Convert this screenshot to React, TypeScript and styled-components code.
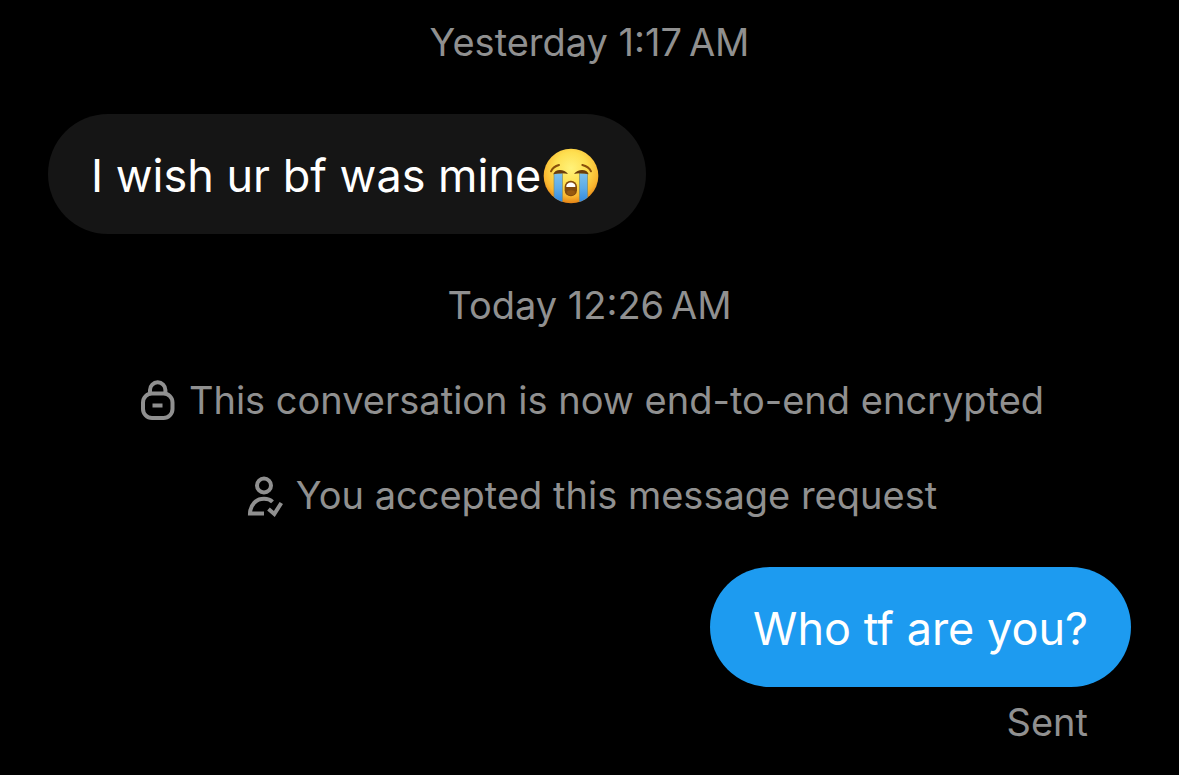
import React from "react";
import styled, { createGlobalStyle } from "styled-components";

const GlobalStyle = createGlobalStyle`
  body {
    margin: 0;
    background: #000;
    font-family: Inter, "Liberation Sans", sans-serif;
  }
`;

const Conversation = styled.main`
  display: flex;
  flex-direction: column;
  gap: 48px;
  padding: 19px 48px 28px;
`;

const Notice = styled.p`
  display: flex;
  align-items: center;
  justify-content: center;
  gap: 12px;
  margin: 0;
  color: #909090;
  font-size: 38px;
  line-height: 47px;
`;

const Message = styled.article<{ $own?: boolean }>`
  display: flex;
  flex-direction: column;
  align-items: ${({ $own }) => ($own ? "flex-end" : "flex-start")};
`;

const Bubble = styled.div<{ $own?: boolean }>`
  display: flex;
  align-items: center;
  gap: 2px;
  padding: 32px 43px 28px;
  border-radius: 60px;
  background: ${({ $own }) => ($own ? "#1d9bf0" : "#151515")};
  color: #fff;
  font-size: 45px;
  line-height: 60px;
`;

const Status = styled.p`
  margin: 0;
  padding: 12px 43px 0;
  color: #909090;
  font-size: 38px;
  line-height: 47px;
`;

const Icon = styled.svg`
  flex: none;
  width: 38px;
  height: 42px;
  margin-left: 4px;
  fill: none;
  stroke: #909090;
  stroke-width: 4;
`;

const Emoji = styled.svg`
  flex: none;
  width: 56px;
  height: 56px;
  margin-right: 4px;
`;

const LockIcon = () => (
  <Icon viewBox="0 0 38 42" aria-hidden="true">
    <path d="M11 14V10a7.7 7.7 0 0 1 15.4 0v4" />
    <rect x="4" y="13.5" width="29.5" height="24.5" rx="9" />
    <path d="M13.5 25.5h10" />
  </Icon>
);

const PersonCheckIcon = () => (
  <Icon viewBox="0 0 38 42" aria-hidden="true">
    <circle cx="18" cy="10.5" r="7" />
    <path d="M18 38.5H4c.4-9 6-14.7 14-14.7 3.6 0 6.5 1 8.5 3" />
    <path d="M22.5 34l5.8 5 7-11" />
  </Icon>
);

const CryingFace = () => (
  <Emoji viewBox="0 0 168 168" role="img" aria-label="Loudly crying face">
    <defs>
      <radialGradient id="face" cx="50%" cy="36%" r="66%">
        <stop offset="0" stopColor="#fff27a" />
        <stop offset="0.45" stopColor="#fedf50" />
        <stop offset="0.78" stopColor="#f9b62f" />
        <stop offset="1" stopColor="#e07a12" />
      </radialGradient>
      <linearGradient id="tear" x1="0" y1="0" x2="0" y2="1">
        <stop offset="0" stopColor="#7cc0ec" />
        <stop offset="0.5" stopColor="#5cabe8" />
        <stop offset="1" stopColor="#2f86dc" />
      </linearGradient>
      <clipPath id="head">
        <circle cx="84" cy="84" r="82" />
      </clipPath>
    </defs>
    <circle cx="84" cy="84" r="82" fill="url(#face)" />
    <g clipPath="url(#head)">
      <rect x="33" y="76" width="25" height="90" fill="url(#tear)" stroke="#7f8c6c" strokeWidth="2" />
      <rect x="109" y="76" width="25" height="90" fill="url(#tear)" stroke="#7f8c6c" strokeWidth="2" />
    </g>
    <path d="M31 79C35 62 64 62 75 78 63 75 48 75 31 79Z" fill="#6b3d0b" />
    <path d="M93 78C104 62 133 62 137 79 120 75 105 75 93 78Z" fill="#6b3d0b" />
    <path
      d="M24 70C28 61 37 54 48 51M144 70C140 61 131 54 118 51"
      fill="none"
      stroke="#8a500b"
      strokeWidth="6"
      strokeLinecap="round"
    />
    <rect x="65" y="98" width="37" height="47" rx="18" fill="#814a0d" />
    <path d="M70 117C68 99 99 99 97 117Z" fill="#fff" />
    <ellipse cx="84" cy="134" rx="12" ry="7" fill="#97590f" />
  </Emoji>
);

export default function App() {
  return (
    <>
      <GlobalStyle />
      <Conversation>
        <Notice>Yesterday 1:17{"\u202f"}AM</Notice>
        <Message>
          <Bubble>
            <span>I wish ur bf was mine</span>
            <CryingFace />
          </Bubble>
        </Message>
        <Notice>Today 12:26{"\u202f"}AM</Notice>
        <Notice>
          <LockIcon />
          <span>This conversation is now end-to-end encrypted</span>
        </Notice>
        <Notice>
          <PersonCheckIcon />
          <span>You accepted this message request</span>
        </Notice>
        <Message $own>
          <Bubble $own>Who tf are you?</Bubble>
          <Status>Sent</Status>
        </Message>
      </Conversation>
    </>
  );
}
